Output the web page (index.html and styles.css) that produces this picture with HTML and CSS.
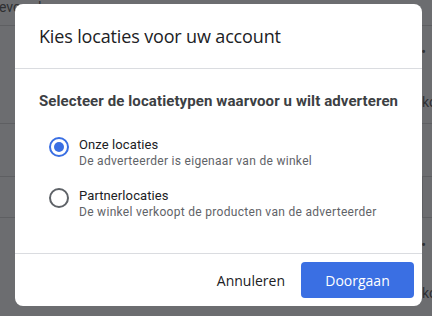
FILE: index.html
```html
<!DOCTYPE html>
<html lang="nl">
<head>
  <meta charset="UTF-8" />
  <meta name="viewport" content="width=device-width, initial-scale=1.0"/>
  <title>Locaties kiezen</title>
  <link rel="stylesheet" href="styles.css">
</head>
<body>

<!-- pagina achter de overlay -->
<div class="page">
  <div class="page-top">evoordeer</div>
  <div class="page-row row-a">
    <span class="dot">•</span>
    <span class="side">ko</span>
  </div>
  <div class="page-row row-b"></div>
  <div class="page-row row-c"><span class="cell"></span></div>
  <div class="page-row row-d">
    <span class="dot">•</span>
    <span class="side">ko</span>
  </div>
</div>

<div class="overlay">
  <div class="dialog">
    <div class="dialog-header">
      <h1 class="dialog-title">Kies locaties voor uw account</h1>
    </div>

    <div class="dialog-body">
      <h2 class="question">Selecteer de locatietypen waarvoor u wilt adverteren</h2>

      <label class="option">
        <input type="radio" name="loc" checked>
        <span class="radio"></span>
        <span class="option-text">
          <span class="option-label">Onze locaties</span>
          <span class="option-hint">De adverteerder is eigenaar van de winkel</span>
        </span>
      </label>

      <label class="option">
        <input type="radio" name="loc">
        <span class="radio"></span>
        <span class="option-text">
          <span class="option-label">Partnerlocaties</span>
          <span class="option-hint">De winkel verkoopt de producten van de adverteerder</span>
        </span>
      </label>
    </div>

    <div class="dialog-footer">
      <button class="btn btn-text">Annuleren</button>
      <button class="btn btn-primary">Doorgaan</button>
    </div>
  </div>
</div>

</body>
</html>
```

FILE: styles.css
```css
/* --- basis --- */
:root {
  --scrim: #6c6d70;
  --line-dark: #5e5f62;
  --text: #202124;
  --text-soft: #5f6368;
  --blue: #3a6fe3;
  --divider: #dadce0;
}
* {
  box-sizing: border-box;
  margin: 0;
  padding: 0;
}

body {
  width: 432px;
  height: 316px;
  overflow: hidden;
  background: var(--scrim);
  font-family: Roboto, "Liberation Sans", sans-serif;
  color: var(--text);
}

/* --- pagina achter de overlay --- */
.page {
  height: 316px;
  display: flex;
  flex-direction: column;
  color: #2e2f32;
  font-size: 14px;
}
.page-top {
  height: 26px;
  border-bottom: 1px solid var(--line-dark);
  line-height: 14px;
  margin-left: -1px;
}
.page-row {
  border-bottom: 1px solid var(--line-dark);
  display: flex;
  flex-direction: column;
  align-items: flex-end;
}
.row-a { height: 98px; }
.row-b { height: 53px; }
.row-c { height: 41px; }
.row-d { flex: 1; border-bottom: none; }

.dot {
  line-height: 14px;
  margin-right: 6px;
}
.side {
  line-height: 16px;
  margin-right: -5px;
}
.row-a .dot { margin-top: 19px; }
.row-a .side { margin-top: 35px; }
.row-d .dot { margin-top: 20px; }
.row-d .side { margin-top: 33px; }

.cell {
  width: 10px;
  height: 100%;
  border-left: 1px solid var(--line-dark);
}

/* --- overlay en dialoog --- */
.overlay {
  position: absolute;
  inset: 0;
}
.dialog {
  position: absolute;
  left: 15px;
  top: 4px;
  width: 407px;
  height: 302px;
  background: #fff;
  border-radius: 8px;
  display: flex;
  flex-direction: column;
  overflow: hidden;
}

.dialog-header {
  height: 65px;
  padding: 0 24px;
  display: flex;
  align-items: center;
  border-bottom: 1px solid var(--divider);
}
.dialog-title {
  font-family: "Open Sans", sans-serif;
  font-size: 18px;
  font-weight: 400;
  color: var(--text);
  letter-spacing: -0.15px;
}

.dialog-body {
  flex: 1;
  padding: 22px 20px 0 24px;
}
.question {
  font-size: 15px;
  font-weight: 700;
  line-height: 20px;
  color: #3c4043;
  letter-spacing: 0.1px;
  white-space: nowrap;
  margin-bottom: 25px;
}

.option {
  display: flex;
  align-items: flex-start;
  margin-bottom: 18px;
  cursor: pointer;
}
.option input {
  display: none;
}
.radio {
  width: 20px;
  height: 20px;
  border: 2px solid #5f6368;
  border-radius: 50%;
  margin: 1px 0 0 10px;
  flex-shrink: 0;
  position: relative;
}
.option input:checked + .radio {
  border-color: var(--blue);
}
.option input:checked + .radio::after {
  content: '';
  position: absolute;
  inset: 3px;
  border-radius: 50%;
  background: var(--blue);
}
.option-text {
  display: flex;
  flex-direction: column;
  margin-left: 10px;
}
.option-label {
  font-size: 13px;
  line-height: 17px;
  color: var(--text);
  letter-spacing: 0.1px;
}
.option-hint {
  font-size: 12px;
  line-height: 16px;
  color: var(--text-soft);
  letter-spacing: 0.3px;
}

.dialog-footer {
  height: 53px;
  border-top: 1px solid var(--divider);
  display: flex;
  justify-content: flex-end;
  align-items: center;
  gap: 16px;
  padding: 0 8px;
}
.btn {
  font-family: "Open Sans", sans-serif;
  font-size: 14px;
  font-weight: 500;
  border: none;
  background: none;
  cursor: pointer;
}
.btn-text {
  color: var(--text);
}
.btn-primary {
  width: 113px;
  height: 36px;
  border-radius: 4px;
  background: var(--blue);
  color: #fff;
}
```
